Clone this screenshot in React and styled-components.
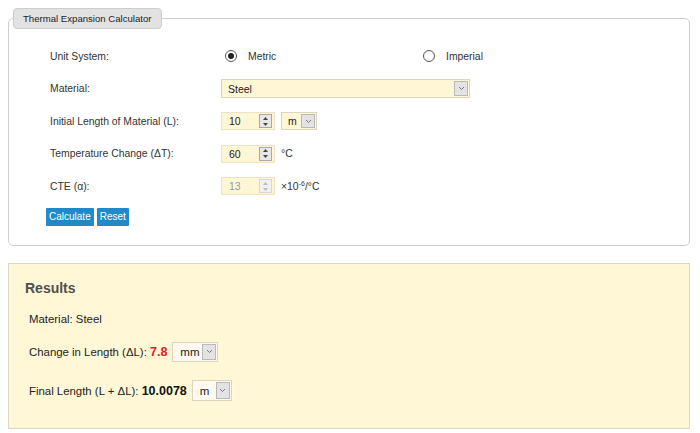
import React from 'react';
import styled, { createGlobalStyle } from 'styled-components';

const Global = createGlobalStyle`
  body {
    margin: 8px;
    font-family: "Liberation Sans", Arial, sans-serif;
    color: #333;
    background: #fff;
  }
`

const Fieldset = styled.fieldset`
  margin: 0;
  padding: 0 0 14px 0;
  border: 1px solid #cfcfcf;
  border-radius: 5px;
  width: 682px;
  box-sizing: border-box;
`

const Legend = styled.legend`
  margin-left: 4px;
  padding: 0 9px;
  box-sizing: border-box;
  height: 21px;
  line-height: 19px;
  font-size: 9.6px;
  background: #e2e2e2;
  border: 1px solid #cdcdcd;
  border-radius: 4px;
  color: #222;
`

const Form = styled.div`
  display: grid;
  grid-template-columns: 175px 1fr;
  grid-template-rows: repeat(5, 32.5px) 28px;
  align-items: center;
  padding: 11px 0 0 37px;
  font-size: 10.4px;
`

const Label = styled.div`
  padding-left: 4px;
`

const Field = styled.div`
  display: flex;
  align-items: center;
  gap: 6px;
`

const RadioGroup = styled.div`
  display: grid;
  grid-template-columns: 198px 1fr;
`

const RadioOption = styled.label`
  display: flex;
  align-items: center;
  gap: 11px;
  padding-left: 4px;
`

const Radio = styled.span`
  width: 10px;
  height: 10px;
  border-radius: 50%;
  border: 1px solid #555;
  background: #fff;
  display: flex;
  align-items: center;
  justify-content: center;
  &::after {
    content: '';
    width: 6px;
    height: 6px;
    border-radius: 50%;
    background: ${p => (p.$on ? '#222' : 'transparent')};
  }
`

const Select = styled.div`
  display: flex;
  align-items: stretch;
  box-sizing: border-box;
  width: ${p => p.$w}px;
  height: ${p => p.$h || 19}px;
  border: 1px solid #dcd6c0;
  background: ${p => (p.$plain ? '#fffaf0' : '#fff6d5')};
  font-size: ${p => p.$fs || 10.5}px;
  color: #222;
`

const SelectText = styled.span`
  flex: 1;
  display: flex;
  align-items: center;
  padding-left: ${p => p.$pl || 6}px;
`

const Arrow = styled.span`
  width: 14px;
  margin: 1px;
  background: #e3e3e3;
  border: 1px solid #b9b9b9;
  box-sizing: border-box;
  display: flex;
  align-items: center;
  justify-content: center;
`

const NumberBox = styled.div`
  display: flex;
  align-items: center;
  box-sizing: border-box;
  width: 54px;
  height: 18px;
  border: 1px solid #ebe3c3;
  background: #fff6d5;
  padding: 0 2px 0 7px;
  font-size: 10.5px;
  color: ${p => (p.$disabled ? '#999' : '#222')};
`

const NumText = styled.span`
  flex: 1;
`

const Spin = styled.span`
  width: 11px;
  height: 12px;
  border: 1px solid ${p => (p.$disabled ? '#d6d6d6' : '#a9a9a9')};
  background: ${p => (p.$disabled ? '#f1f1f1' : '#e8e8e8')};
  display: flex;
  flex-direction: column;
  align-items: center;
  justify-content: space-around;
`

const Unit = styled.span`
  white-space: nowrap;
`

const Sup = styled.sup`
  font-size: 7px;
  vertical-align: 4px;
  line-height: 0;
`

const Buttons = styled.div`
  grid-column: 1 / 3;
  display: flex;
  gap: 3px;
`

const Button = styled.button`
  border: none;
  background: #2089c9;
  color: #fff;
  font-family: inherit;
  font-size: 10px;
  height: 18px;
  padding: 0 3px;
  border-radius: 1px;
`

const Results = styled.div`
  margin-top: 17px;
  box-sizing: border-box;
  width: 682px;
  height: 166px;
  background: #fff7d6;
  border: 1px solid #ddd6c0;
  padding: 16px 16px;
  font-size: 11.4px;
  color: #222;
`

const ResultsTitle = styled.h3`
  margin: 0 0 9px 0;
  font-size: 14px;
  color: #505050;
  font-weight: bold;
`

const ResultRow = styled.div`
  display: flex;
  align-items: center;
  gap: 5px;
  padding-left: 4px;
  height: ${p => p.$h}px;
`

const Value = styled.b`
  color: ${p => p.$red ? '#e02020' : '#111'};
  font-size: 12.5px;
`

const Chevron = () => (
  <svg width="7" height="5" viewBox="0 0 7 5">
    <path d="M1 1 L3.5 3.5 L6 1" fill="none" stroke="#777" strokeWidth="1" />
  </svg>
)

const Tri = ({ up, disabled }) => (
  <svg width="5" height="3" viewBox="0 0 5 3">
    <path d={up ? 'M0 3 L2.5 0 L5 3 Z' : 'M0 0 L2.5 3 L5 0 Z'} fill={disabled ? '#bbb' : '#444'} />
  </svg>
)

const Num = ({ value, disabled }) => (
  <NumberBox $disabled={disabled}>
    <NumText>{value}</NumText>
    <Spin $disabled={disabled}>
      <Tri up disabled={disabled} />
      <Tri disabled={disabled} />
    </Spin>
  </NumberBox>
)

const Dropdown = ({ text, w, h, fs, pl, plain }) => (
  <Select $w={w} $h={h} $fs={fs} $plain={plain}>
    <SelectText $pl={pl}>{text}</SelectText>
    <Arrow><Chevron /></Arrow>
  </Select>
)

export default function App() {
  return (
    <>
      <Global />
      <Fieldset>
        <Legend>Thermal Expansion Calculator</Legend>
        <Form>
          <Label>Unit System:</Label>
          <RadioGroup>
            <RadioOption><Radio $on />Metric</RadioOption>
            <RadioOption><Radio />Imperial</RadioOption>
          </RadioGroup>

          <Label>Material:</Label>
          <Field><Dropdown text="Steel" w={249} /></Field>

          <Label>Initial Length of Material (L):</Label>
          <Field>
            <Num value="10" />
            <Dropdown text="m" w={36} h={18} />
          </Field>

          <Label>Temperature Change (ΔT):</Label>
          <Field><Num value="60" /><Unit>°C</Unit></Field>

          <Label>CTE (α):</Label>
          <Field><Num value="13" disabled /><Unit>×10<Sup>-6</Sup>/°C</Unit></Field>

          <Buttons>
            <Button>Calculate</Button>
            <Button>Reset</Button>
          </Buttons>
        </Form>
      </Fieldset>

      <Results>
        <ResultsTitle>Results</ResultsTitle>
        <ResultRow $h={28}>Material: Steel</ResultRow>
        <ResultRow $h={38}>
          <span>Change in Length (ΔL): <Value $red>7.8</Value></span>
          <Dropdown text="mm" w={46} h={20} fs={11.5} pl={7} plain />
        </ResultRow>
        <ResultRow $h={40}>
          <span>Final Length (L + ΔL): <Value>10.0078</Value></span>
          <Dropdown text="m" w={40} h={21} fs={11.5} pl={7} plain />
        </ResultRow>
      </Results>
    </>
  );
}
